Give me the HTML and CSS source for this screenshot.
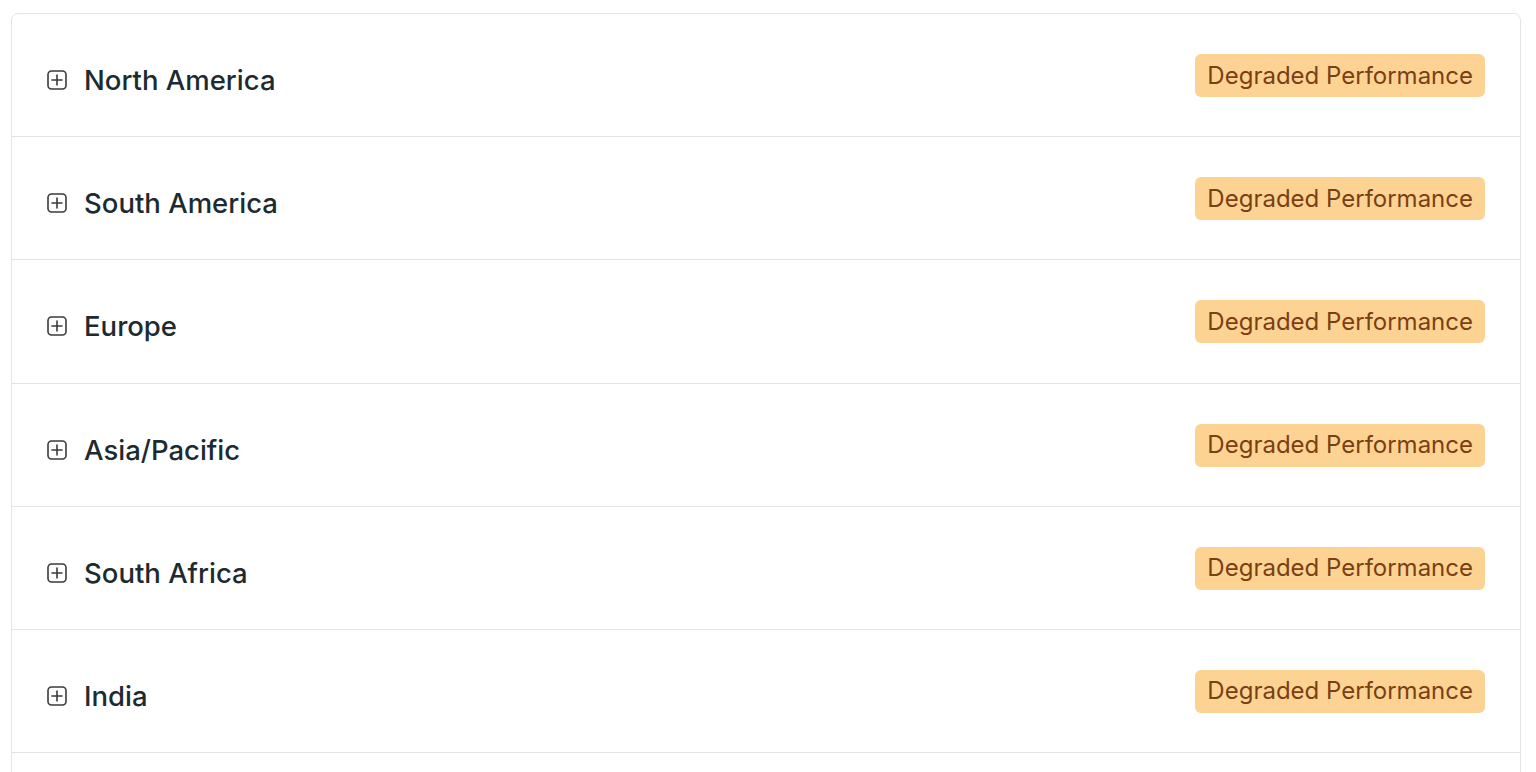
FILE: index.html
```html
<!DOCTYPE html>
<html lang="en">
<head>
<meta charset="utf-8">
<title>Regions status</title>
<link rel="stylesheet" href="styles.css">
</head>
<body>
<div class="card">
  <div class="row">
    <div class="title"><svg class="icon" viewBox="0 0 20 20"><rect x="1" y="1" width="18" height="18" rx="3.5"/><path d="M10 5v10M5 10h10"/></svg><span>North America</span></div>
    <span class="badge">Degraded Performance</span>
  </div>
  <div class="row">
    <div class="title"><svg class="icon" viewBox="0 0 20 20"><rect x="1" y="1" width="18" height="18" rx="3.5"/><path d="M10 5v10M5 10h10"/></svg><span>South America</span></div>
    <span class="badge">Degraded Performance</span>
  </div>
  <div class="row">
    <div class="title"><svg class="icon" viewBox="0 0 20 20"><rect x="1" y="1" width="18" height="18" rx="3.5"/><path d="M10 5v10M5 10h10"/></svg><span>Europe</span></div>
    <span class="badge">Degraded Performance</span>
  </div>
  <div class="row">
    <div class="title"><svg class="icon" viewBox="0 0 20 20"><rect x="1" y="1" width="18" height="18" rx="3.5"/><path d="M10 5v10M5 10h10"/></svg><span>Asia/Pacific</span></div>
    <span class="badge">Degraded Performance</span>
  </div>
  <div class="row">
    <div class="title"><svg class="icon" viewBox="0 0 20 20"><rect x="1" y="1" width="18" height="18" rx="3.5"/><path d="M10 5v10M5 10h10"/></svg><span>South Africa</span></div>
    <span class="badge">Degraded Performance</span>
  </div>
  <div class="row">
    <div class="title"><svg class="icon" viewBox="0 0 20 20"><rect x="1" y="1" width="18" height="18" rx="3.5"/><path d="M10 5v10M5 10h10"/></svg><span>India</span></div>
    <span class="badge">Degraded Performance</span>
  </div>
</div>
</body>
</html>
```
FILE: styles.css
```css
html, body {
  margin: 0;
  padding: 0;
  background: #ffffff;
}
body {
  padding: 13px 15px 20px 11px;
  font-family: Inter, "Noto Sans", "Liberation Sans", sans-serif;
}
.card {
  border: 1.5px solid #e2e4e6;
  border-radius: 7px;
  background: #fff;
  padding-bottom: 60px;
}
.row {
  display: flex;
  justify-content: space-between;
  align-items: flex-start;
  height: 123.2px;
  box-sizing: border-box;
  padding: 40px 35px 0 35px;
  border-bottom: 1.5px solid #e2e4e6;
}
.title {
  display: flex;
  align-items: center;
  gap: 17px;
  height: 52px;
  font-size: 27.5px;
  font-weight: 500;
  color: #1d2b31;
}
.icon {
  width: 20px;
  height: 20px;
  fill: none;
  stroke: #3b3b3b;
  stroke-width: 1.6;
  stroke-linecap: round;
}
.badge {
  display: inline-flex;
  align-items: center;
  height: 43px;
  padding: 0 12px;
  border-radius: 6px;
  background: #fdd393;
  color: #7b3f14;
  font-size: 24px;
  font-weight: 400;
  line-height: 1;
}
```
